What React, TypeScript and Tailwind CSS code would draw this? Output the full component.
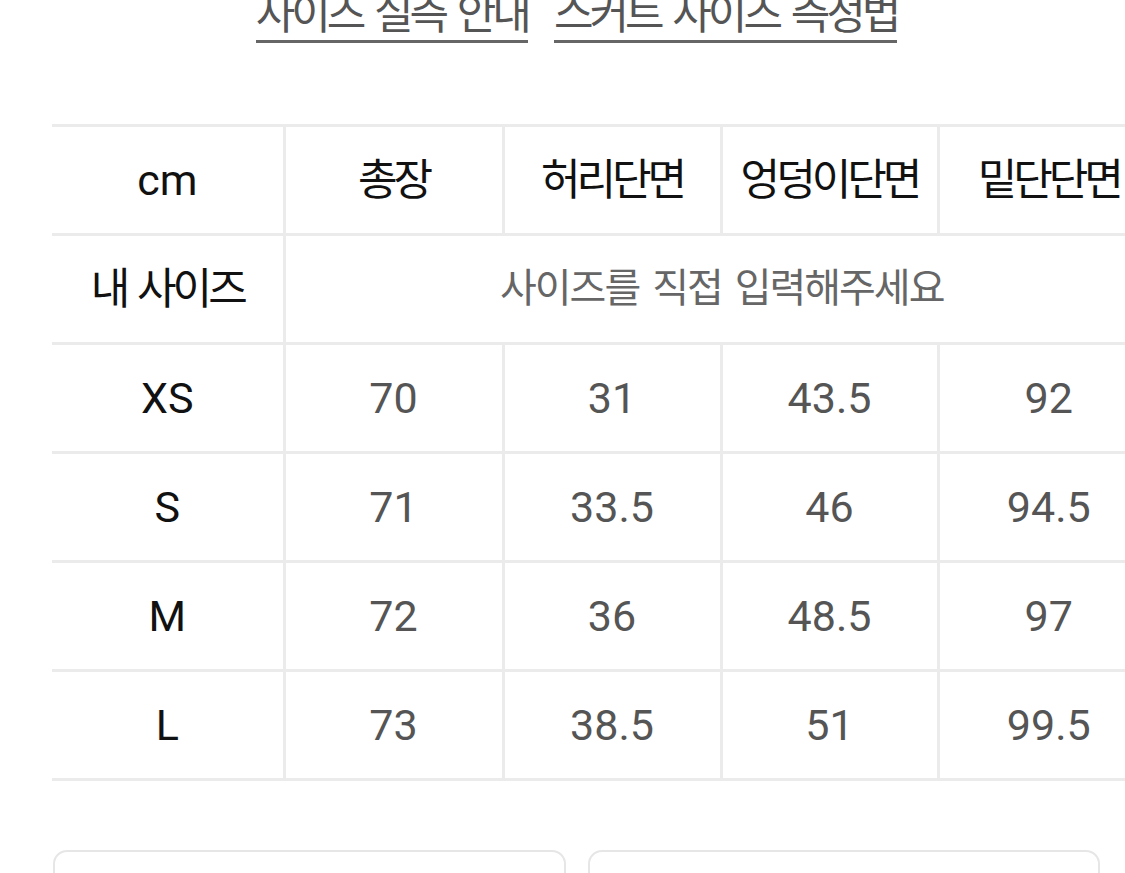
import React from "react";

const font = { fontFamily: 'Roboto, "Noto Sans CJK KR", sans-serif' };

const headers = ["총장", "허리단면", "엉덩이단면", "밑단단면"];

const rows = [
  { size: "XS", values: ["70", "31", "43.5", "92"] },
  { size: "S", values: ["71", "33.5", "46", "94.5"] },
  { size: "M", values: ["72", "36", "48.5", "97"] },
  { size: "L", values: ["73", "38.5", "51", "99.5"] },
];

export default function App() {
  return (
    <div className="w-[1125px] h-[873px] overflow-hidden bg-white" style={font}>
      {/* guide links */}
      <div className="flex justify-center gap-[26px] -mt-[12px] pl-[28px] text-[43px] leading-[52px] text-[#555555] tracking-[-4px] [word-spacing:5px]">
        <a className="border-b-[3px] border-[#666666]">사이즈 실측 안내</a>
        <a className="border-b-[3px] border-[#666666]">스커트 사이즈 측정법</a>
      </div>

      {/* size table */}
      <div className="mt-[81px] ml-[52px] w-[1106px]">
        <table className="border-collapse table-fixed w-[1106px] text-center text-[43px]">
          <colgroup>
            <col className="w-[232px]" />
            <col className="w-[219px]" />
            <col className="w-[218px]" />
            <col className="w-[217px]" />
            <col className="w-[220px]" />
          </colgroup>
          <tbody>
            <tr className="h-[109px] border-y-[3px] border-[#ebebeb]">
              <td className="text-[#111111]">cm</td>
              {headers.map((h) => (
                <td key={h} className="border-l-[3px] border-[#ebebeb] text-[#111111] tracking-[-4px]">
                  {h}
                </td>
              ))}
            </tr>
            <tr className="h-[109px] border-b-[3px] border-[#ebebeb]">
              <td className="text-[#111111] tracking-[-4px] [word-spacing:4px]">내 사이즈</td>
              <td colSpan={4} className="border-l-[3px] border-[#ebebeb] text-[#666666] text-[40px] tracking-[-2px] [word-spacing:5px]">
                사이즈를 직접 입력해주세요
              </td>
            </tr>
            {rows.map((r) => (
              <tr key={r.size} className="h-[109px] border-b-[3px] border-[#ebebeb]">
                <td className="text-[#111111]">{r.size}</td>
                {r.values.map((v, i) => (
                  <td key={i} className="border-l-[3px] border-[#ebebeb] text-[#555555]">
                    {v}
                  </td>
                ))}
              </tr>
            ))}
          </tbody>
        </table>
      </div>

      {/* option boxes */}
      <div className="flex gap-[22px] mt-[69px] ml-[53px] w-[1047px]">
        <div className="flex-1 h-[80px] rounded-[14px] border-2 border-[#e6e6e6]" />
        <div className="flex-1 h-[80px] rounded-[14px] border-2 border-[#e6e6e6]" />
      </div>
    </div>
  );
}
